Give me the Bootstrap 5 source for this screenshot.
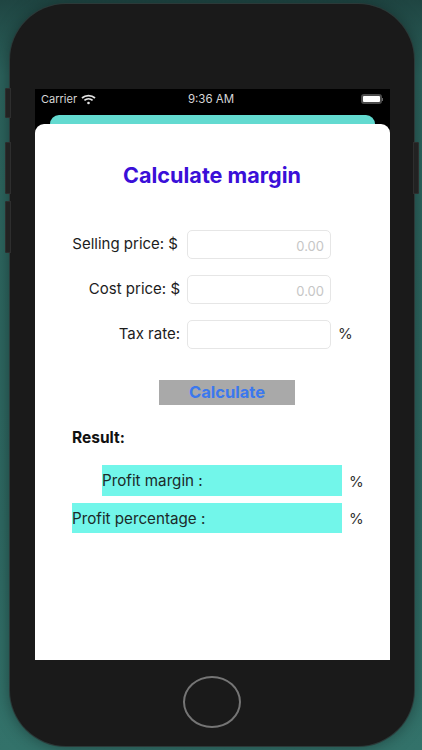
<!DOCTYPE html>
<html lang="en">
<head>
<meta charset="utf-8">
<title>Calculate margin</title>
<link href="https://cdn.jsdelivr.net/npm/bootstrap@5.3.0/dist/css/bootstrap.min.css" rel="stylesheet">
<style>
html,body{height:100%;margin:0;overflow:hidden}
body{width:422px;height:750px;font-family:Inter,"Liberation Sans",sans-serif;color:#1c1c1c;background:linear-gradient(180deg,#1f4542 0,#2c625c 10%,#2f6a63 70%,#33726a 100%)}
.device{width:404px;height:742px;margin:4px 0 0 10px;padding:85px 24px 0 25px;background:#1a1a1a;border-radius:56px;box-shadow:0 0 0 1px #2b3a39,0 0 16px rgba(15,35,33,.6);position:relative}
.side-btn{position:absolute;width:6px;background:#222;border-radius:2px 0 0 2px;box-shadow:inset 0 0 0 1px #2e2e2e}
.sb-a{left:-5px;top:84px;height:30px}
.sb-b{left:-5px;top:138px;height:52px}
.sb-c{left:-5px;top:197px;height:52px}
.sb-d{left:auto;right:-5px;top:138px;height:52px;border-radius:0 2px 2px 0}
.screen{width:355px;height:571px;background:#000}
.status{height:26px;padding:0 7px 6px 6px;color:#d6d6d6;font-size:11px;line-height:1}
.status-time{width:120px;text-align:center;margin-left:auto;margin-right:auto;font-size:11.5px;padding:2px 2px 0 0}
.status-left,.status-right{width:110px}
.batt{width:21px;height:10px;border:2px solid #4b4b4b;border-radius:3px;background:#fff}
.batt-tip{width:1px;height:3px;background:#666}
.peek{height:9px;margin:0 15px;background:#63dad0;border-radius:9px 9px 0 0}
.sheet{height:536px;background:#fff;border-radius:9px 9px 0 0;position:relative;padding-top:37px}
.title-main{font-size:21.6px;font-weight:700;color:#3a0fd8;line-height:28px;margin:0;text-align:center;padding-right:1px}
.form-area{margin-top:41px}
.field{height:29px;margin-bottom:16px}
.lbl{width:145px;text-align:right;font-size:15px;margin:0;line-height:29px;flex:none;padding-bottom:3px}
.lbl-sell{padding-right:2px}
.fin{width:144px;height:29px;margin-left:7px;flex:none;border:1px solid #e6e6e6;border-radius:5px;text-align:right;padding:2px 6px 0;font-size:13px;font-family:inherit;background:#fff;outline:0}
.fin::placeholder{color:#c6c6c6;opacity:1}
.pct{font-size:15px;line-height:1;margin-left:7px;color:#333;padding-bottom:2px}
.calc{display:block;width:136px;height:25px;margin:31px 0 0 124px;padding:0;border:0;border-radius:0;background:#a9a9a9;color:#3b78ee;font-size:16.5px;font-weight:700;line-height:25px;font-family:inherit}
.res-head{font-size:15.5px;font-weight:700;color:#111;margin:21px 0 0 37px;line-height:24px}
.res-row{height:31px}
.res-second{height:30px;margin-top:7px}
.res-bar{background:#72f6ea;height:100%;font-size:15.2px;line-height:31px;color:#1c2a29}
.bar-a{width:240px;margin-left:67px}
.bar-b{width:270px;margin-left:37px}
.res-pct{margin-left:7px;padding-bottom:0;padding-top:1px}
.res-first{margin-top:15px}
.home{width:58px;height:52px;border:2px solid #757575;border-radius:50%;margin:16px 0 0 148px}
</style>
</head>
<body>
<div class="device">
  <span class="side-btn sb-a"></span>
  <span class="side-btn sb-b"></span>
  <span class="side-btn sb-c"></span>
  <span class="side-btn sb-d"></span>
  <div class="screen">
    <div class="status d-flex align-items-center justify-content-between">
      <div class="status-left d-flex align-items-center gap-1">
        <span>Carrier</span>
        <svg width="15" height="11" viewBox="0 0 15 11" fill="none" stroke="#e4e4e4" stroke-width="1.7" aria-hidden="true"><path d="M1 4 C4.6 .7 10.4 .7 14 4"/><path d="M3.4 6.3 C5.7 4.3 9.3 4.3 11.6 6.3"/><circle cx="7.5" cy="9" r="1.3" fill="#e4e4e4" stroke="none"/></svg>
      </div>
      <div class="status-time">9:36 AM</div>
      <div class="status-right d-flex align-items-center justify-content-end">
        <span class="batt"></span><span class="batt-tip"></span>
      </div>
    </div>
    <div class="peek"></div>
    <div class="sheet">
      <h1 class="title-main">Calculate margin</h1>
      <div class="form-area">
        <div class="field d-flex align-items-center">
          <label class="lbl lbl-sell" for="sell">Selling price: $</label>
          <input class="fin" id="sell" type="text" placeholder="0.00">
        </div>
        <div class="field d-flex align-items-center">
          <label class="lbl" for="cost">Cost price: $</label>
          <input class="fin" id="cost" type="text" placeholder="0.00">
        </div>
        <div class="field d-flex align-items-center">
          <label class="lbl" for="tax">Tax rate:</label>
          <input class="fin" id="tax" type="text">
          <span class="pct">%</span>
        </div>
        <button class="calc btn" type="button">Calculate</button>
        <div class="res-head">Result:</div>
        <div class="res-row res-first d-flex align-items-center">
          <div class="res-bar bar-a">Profit margin :</div>
          <span class="pct res-pct">%</span>
        </div>
        <div class="res-row res-second d-flex align-items-center">
          <div class="res-bar bar-b">Profit percentage :</div>
          <span class="pct res-pct">%</span>
        </div>
      </div>
    </div>
  </div>
  <div class="home"></div>
</div>
<script src="https://cdn.jsdelivr.net/npm/bootstrap@5.3.0/dist/js/bootstrap.bundle.min.js"></script>
</body>
</html>
